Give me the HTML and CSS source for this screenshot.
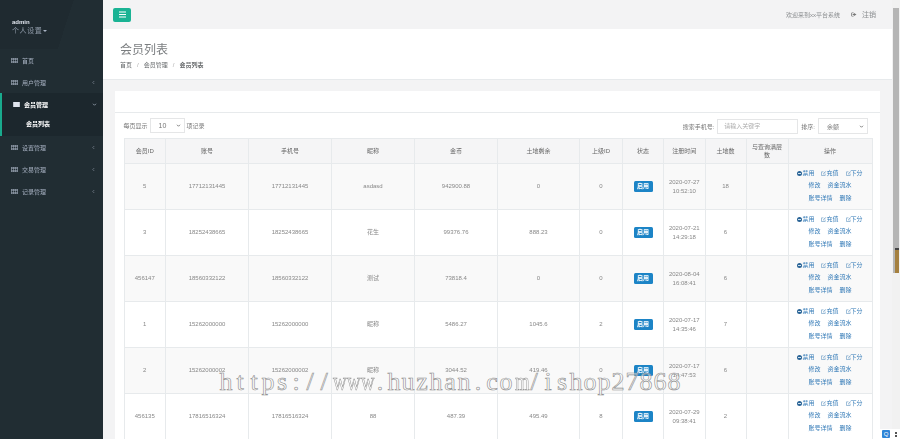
FILE: index.html
```html
<!DOCTYPE html>
<html lang="zh">
<head>
<meta charset="utf-8">
<title>会员列表</title>
<link rel="stylesheet" href="styles.css">
</head>
<body>
<svg class="defs" aria-hidden="true">
  <symbol id="i-th" viewBox="0 0 8 6"><path d="M0 0h8v6H0z M.7.7v1.2h1.8V.7z M3.1.7v1.2h1.8V.7z M5.5.7v1.2h1.8V.7z M.7 2.5v1.2h1.8V2.5z M3.1 2.5v1.2h1.8V2.5z M5.5 2.5v1.2h1.8V2.5z M.7 4.2v1.1h1.8V4.2z M3.1 4.2v1.1h1.8V4.2z M5.5 4.2v1.1h1.8V4.2z" fill-rule="evenodd"/></symbol>
  <symbol id="i-edit" viewBox="0 0 6 6"><path d="M3 1H.6v4.4H5V3.2" fill="none" stroke="currentColor" stroke-width=".7"/><path d="M2.2 3.8 5.2.4l.6.6-3.1 3.2z" fill="currentColor"/></symbol>
  <symbol id="i-left" viewBox="0 0 4 6"><path d="M3 1 1 3l2 2" fill="none" stroke="currentColor" stroke-width=".8"/></symbol>
  <symbol id="i-down" viewBox="0 0 6 4"><path d="M1 1l2 2 2-2" fill="none" stroke="currentColor" stroke-width="1"/></symbol>
</svg>
<div class="app">
  <aside class="sidebar">
    <div class="profile">
      <div class="profile-name">admin</div>
      <div class="profile-menu">个人设置<span class="caret"></span></div>
    </div>
    <nav class="nav">
      <a class="nav-item"><svg class="ico"><use href="#i-th"/></svg><span class="nav-label">首页</span></a>
      <a class="nav-item"><svg class="ico"><use href="#i-th"/></svg><span class="nav-label">用户管理</span><svg class="chev"><use href="#i-left"/></svg></a>
      <div class="nav-group">
        <a class="nav-item nav-item-active"><svg class="ico" viewBox="0 0 8 6"><path d="M0 0h8v6H0z"/></svg><span class="nav-label">会员管理</span><svg class="chev-down"><use href="#i-down"/></svg></a>
        <a class="nav-sub">会员列表</a>
      </div>
      <a class="nav-item"><svg class="ico"><use href="#i-th"/></svg><span class="nav-label">设置管理</span><svg class="chev"><use href="#i-left"/></svg></a>
      <a class="nav-item"><svg class="ico"><use href="#i-th"/></svg><span class="nav-label">交易管理</span><svg class="chev"><use href="#i-left"/></svg></a>
      <a class="nav-item"><svg class="ico"><use href="#i-th"/></svg><span class="nav-label">记录管理</span><svg class="chev"><use href="#i-left"/></svg></a>
    </nav>
  </aside>

  <main class="main">
    <header class="topbar">
      <button class="toggle"><svg class="toggle-ico" viewBox="0 0 7 7"><path d="M0 .5h7v1H0zM0 3h7v1H0zM0 5.5h7v1H0z"/></svg></button>
      <div class="topbar-right">
        <span class="welcome">欢迎来到xx平台系统</span>
        <a class="logout"><svg class="logout-ico" viewBox="0 0 7 6"><path d="M3 .5H1.2a1 1 0 0 0-1 1v3a1 1 0 0 0 1 1H3v-.8H1.2V1.3H3z"/><path d="M3.5 1.2 6.5 3l-3 1.8V3.8H2V2.2h1.5z"/></svg>注销</a>
      </div>
    </header>

    <section class="page-head">
      <h2 class="page-title">会员列表</h2>
      <ol class="crumbs">
        <li>首页</li>
        <li class="crumb-sep">/</li>
        <li>会员管理</li>
        <li class="crumb-sep">/</li>
        <li class="crumb-now">会员列表</li>
      </ol>
    </section>

    <section class="content">
      <div class="card">
        <div class="card-title"></div>
        <div class="card-body">
          <div class="controls">
            <div class="controls-side">
              <span>每页显示</span>
              <span class="select select-size">10<svg class="sel-arrow"><use href="#i-down"/></svg></span>
              <span>项记录</span>
            </div>
            <div class="controls-side">
              <span>搜索手机号:</span>
              <span class="search">请输入关键字</span>
              <span>排序:</span>
              <span class="select select-sort">余额<svg class="sel-arrow"><use href="#i-down"/></svg></span>
            </div>
          </div>

          <table class="table">
            <colgroup>
              <col class="c-id"><col class="c-acc"><col class="c-acc"><col class="c-acc"><col class="c-acc"><col class="c-land"><col class="c-up"><col class="c-st"><col class="c-time"><col class="c-ln"><col class="c-lv"><col class="c-op">
            </colgroup>
            <thead>
              <tr><th>会员ID</th><th>账号</th><th>手机号</th><th>昵称</th><th>金币</th><th>土地剩余</th><th>上级ID</th><th>状态</th><th>注册时间</th><th>土地数</th><th>与查询满层数</th><th>操作</th></tr>
            </thead>
            <tbody>
              <tr><td>5</td><td>17712131445</td><td>17712131445</td><td>asdasd</td><td>942900.88</td><td>0</td><td>0</td><td><span class="badge">启用</span></td><td>2020-07-27<br>10:52:10</td><td>18</td><td></td>
                <td class="ops"><div class="ops-line"><a><i class="dot"></i>禁用</a><a><svg class="edit"><use href="#i-edit"/></svg>充值</a><a><svg class="edit"><use href="#i-edit"/></svg>下分</a></div><div class="ops-line"><a>修改</a><a>资金流水</a></div><div class="ops-line"><a>账号详情</a><a>删除</a></div></td></tr>
              <tr><td>3</td><td>18252438665</td><td>18252438665</td><td>花生</td><td>99376.76</td><td>888.23</td><td>0</td><td><span class="badge">启用</span></td><td>2020-07-21<br>14:29:18</td><td>6</td><td></td>
                <td class="ops"><div class="ops-line"><a><i class="dot"></i>禁用</a><a><svg class="edit"><use href="#i-edit"/></svg>充值</a><a><svg class="edit"><use href="#i-edit"/></svg>下分</a></div><div class="ops-line"><a>修改</a><a>资金流水</a></div><div class="ops-line"><a>账号详情</a><a>删除</a></div></td></tr>
              <tr><td>456147</td><td>18560332122</td><td>18560332122</td><td>测试</td><td>73818.4</td><td>0</td><td>0</td><td><span class="badge">启用</span></td><td>2020-08-04<br>16:08:41</td><td>6</td><td></td>
                <td class="ops"><div class="ops-line"><a><i class="dot"></i>禁用</a><a><svg class="edit"><use href="#i-edit"/></svg>充值</a><a><svg class="edit"><use href="#i-edit"/></svg>下分</a></div><div class="ops-line"><a>修改</a><a>资金流水</a></div><div class="ops-line"><a>账号详情</a><a>删除</a></div></td></tr>
              <tr><td>1</td><td>15262000000</td><td>15262000000</td><td>昵称</td><td>5486.27</td><td>1045.6</td><td>2</td><td><span class="badge">启用</span></td><td>2020-07-17<br>14:35:46</td><td>7</td><td></td>
                <td class="ops"><div class="ops-line"><a><i class="dot"></i>禁用</a><a><svg class="edit"><use href="#i-edit"/></svg>充值</a><a><svg class="edit"><use href="#i-edit"/></svg>下分</a></div><div class="ops-line"><a>修改</a><a>资金流水</a></div><div class="ops-line"><a>账号详情</a><a>删除</a></div></td></tr>
              <tr><td>2</td><td>15262000002</td><td>15262000002</td><td>昵称</td><td>3044.52</td><td>419.46</td><td>0</td><td><span class="badge">启用</span></td><td>2020-07-17<br>14:47:53</td><td>6</td><td></td>
                <td class="ops"><div class="ops-line"><a><i class="dot"></i>禁用</a><a><svg class="edit"><use href="#i-edit"/></svg>充值</a><a><svg class="edit"><use href="#i-edit"/></svg>下分</a></div><div class="ops-line"><a>修改</a><a>资金流水</a></div><div class="ops-line"><a>账号详情</a><a>删除</a></div></td></tr>
              <tr><td>456135</td><td>17816516324</td><td>17816516324</td><td>88</td><td>487.39</td><td>495.49</td><td>8</td><td><span class="badge">启用</span></td><td>2020-07-29<br>09:38:41</td><td>2</td><td></td>
                <td class="ops"><div class="ops-line"><a><i class="dot"></i>禁用</a><a><svg class="edit"><use href="#i-edit"/></svg>充值</a><a><svg class="edit"><use href="#i-edit"/></svg>下分</a></div><div class="ops-line"><a>修改</a><a>资金流水</a></div><div class="ops-line"><a>账号详情</a><a>删除</a></div></td></tr>
            </tbody>
          </table>
        </div>
      </div>
    </section>
  </main>

  <div class="scrollbar">
    <div class="scroll-thumb"><div class="scroll-mark"></div></div>
  </div>
</div>

<div class="watermark"><span>h</span><span>t</span><span>t</span><span>p</span><span>s</span><span>:</span><span>/</span><span>/</span><span class="wm-wide">w</span><span class="wm-wide">w</span><span class="wm-wide">w</span><span>.</span><span>h</span><span>u</span><span>z</span><span>h</span><span>a</span><span>n</span><span>.</span><span>c</span><span>o</span><span class="wm-wide">m</span><span>/</span><span>i</span><span>s</span><span>h</span><span>o</span><span>p</span><span>2</span><span>7</span><span>8</span><span>6</span><span>8</span></div>
<div class="corner"><span class="corner-q">Q</span><span class="corner-dots"></span></div>
</body>
</html>
```

FILE: styles.css
```css
* { box-sizing: border-box; }
html, body { margin: 0; height: 439px; overflow: hidden; }
body {
  position: relative;
  font-family: "Liberation Sans", "Noto Sans CJK SC", sans-serif;
  font-size: 6px;
  color: #676a6c;
  background: #f3f3f4;
}
.defs { position: absolute; width: 0; height: 0; }
.app { display: flex; height: 439px; overflow: hidden; filter: blur(0.4px); }

/* sidebar */
.sidebar { width: 103px; flex: none; background: #212d33; color: #a7b1c2; }
.profile { height: 49px; padding: 18px 0 0 12px; background: linear-gradient(108deg, #1f2a30 62%, #212d33 62%); }
.profile-name { font-weight: bold; color: #dfe4ed; line-height: 8px; }
.profile-menu { font-size: 7px; letter-spacing: .6px; line-height: 9px; color: #8f9aa8; display: flex; align-items: center; }
.caret { border: 2px solid transparent; border-top-color: #a7b1c2; border-bottom: 0; margin-left: 1px; }
.nav-item { display: flex; align-items: center; height: 22px; padding: 0 8px 0 11px; }
.nav-label { flex: 1; }
.ico { width: 7px; height: 5px; margin-right: 4px; fill: #a7b1c2; }
.chev { width: 3px; height: 5px; color: #8b95a3; }
.chev-down { width: 5px; height: 3px; color: #a7b1c2; }
.nav-group { height: 43px; background: #1c272d; border-left: 2px solid #19aa8d; }
.nav-item-active { color: #fff; font-weight: bold; padding-right: 6px; }
.nav-item-active .ico { fill: #dfe4ed; }
.nav-sub { display: block; color: #fff; font-weight: bold; padding-left: 24px; line-height: 15px; margin-top: 2px; }

/* main */
.main { flex: 1; min-width: 0; display: flex; flex-direction: column; background: #f3f3f4; }
.topbar { height: 29px; flex: none; display: flex; align-items: center; justify-content: space-between; padding: 0 16px 0 10px; }
.toggle { width: 18px; height: 14px; padding: 0; border: 0; border-radius: 2px; background: #1ab394; display: flex; align-items: center; justify-content: center; }
.toggle-ico { width: 7px; height: 7px; fill: #fff; }
.topbar-right { display: flex; align-items: center; gap: 11px; color: #8a8d8f; padding-bottom: 1px; }
.logout { display: flex; align-items: center; gap: 5px; font-size: 7px; }
.logout-ico { width: 6px; height: 5px; fill: #777; }

.page-head { height: 51px; flex: none; background: #fff; border-bottom: 1px solid #e7eaec; padding: 14px 0 0 17px; }
.page-title { margin: 0; font-size: 12px; font-weight: 400; line-height: 14px; color: #7b7e80; }
.crumbs { list-style: none; margin: 4px 0 0; padding: 0; display: flex; line-height: 8px; }
.crumb-sep { margin: 0 5px; color: #aaa; }
.crumb-now { font-weight: bold; }

.content { padding: 11px 12px 0; }
.card { background: #fff; }
.card-title { height: 22px; border-bottom: 1px solid #e7eaec; }
.card-body { padding: 5px 9px 0 8.5px; }
.controls { display: flex; justify-content: space-between; align-items: flex-start; height: 20px; padding-right: 3px; color: #777; }
.controls-side { display: flex; align-items: center; gap: 2px; }
.select { display: flex; align-items: center; justify-content: space-between; border: 1px solid #e5e6e7; color: #777; }
.select-size { width: 35px; height: 15px; padding: 0 3px 0 8px; font-size: 7px; }
.select-sort { width: 50px; height: 16px; margin-left: 1px; padding: 0 3px 0 8px; }
.sel-arrow { width: 5px; height: 3px; color: #555; }
.search { width: 81px; height: 15px; margin: 0 1px; border: 1px solid #e5e6e7; padding: 0 6px; line-height: 13px; color: #aaa; }

.table { width: 747px; border-collapse: collapse; table-layout: fixed; text-align: center; }
.c-id { width: 41.5px; }
.c-acc { width: 83px; }
.c-land { width: 82px; }
.c-up { width: 43px; }
.c-st { width: 41px; }
.c-time { width: 41.5px; }
.c-ln { width: 41px; }
.c-lv { width: 42px; }
.c-op { width: 84px; }
.table th, .table td { border: 1px solid #e7eaec; padding: 0 3px; vertical-align: middle; }
.table th { height: 25px; background: #f5f5f6; font-weight: 400; line-height: 8.5px; color: #666; }
.table td { height: 46px; line-height: 9px; color: #888; }
.table tbody tr:nth-child(odd) td { background: #f9f9f9; }
.badge { display: inline-block; width: 19px; height: 11px; border-radius: 1.5px; background: #1c84c6; color: #fff; line-height: 11px; font-weight: bold; vertical-align: middle; }
.table td.ops { padding-bottom: 2px; }
.ops-line { display: flex; justify-content: center; gap: 7px; line-height: 12.5px; }
.ops-line a { color: #337ab7; display: inline-flex; align-items: center; white-space: nowrap; }
.dot { position: relative; width: 5px; height: 5px; border-radius: 50%; background: #2a6496; flex: none; }
.dot::after { content: ""; position: absolute; left: 1px; right: 1px; top: 2px; height: 1px; background: #cfe0ee; }
.edit { width: 5px; height: 5px; flex: none; color: #5d92bf; }

/* scrollbar */
.scrollbar { width: 8px; flex: none; background: #f1f1f1; padding: 8px 1px 0; }
.scroll-thumb { height: 265px; background: #b5b5b5; display: flex; flex-direction: column; justify-content: flex-end; align-items: flex-end; }
.scroll-mark { width: 4px; height: 25px; background: #a5803f; border-top: 2px solid #444; }

/* overlays */
.watermark {
  position: absolute; left: 219px; top: 366px;
  display: flex;
  font-family: "Liberation Serif", serif; font-size: 26px; line-height: 32px;
  color: rgba(255,255,255,.5); -webkit-text-stroke: .6px #8c8c8c; white-space: nowrap;
}
.watermark span { display: block; width: 14px; text-align: center; }
.watermark .wm-wide { transform: scaleX(.72); }
.corner { position: absolute; right: 0; bottom: 0; width: 22px; height: 10px; background: #fff; display: flex; align-items: center; padding-left: 4px; gap: 5px; }
.corner-q { width: 8px; height: 8px; flex: none; background: #2f86d8; color: #fff; font-size: 6px; line-height: 8px; text-align: center; border-radius: 1px; }
.corner-dots { width: 2px; height: 5px; border-top: 2px solid #555; border-bottom: 2px solid #555; }
```
